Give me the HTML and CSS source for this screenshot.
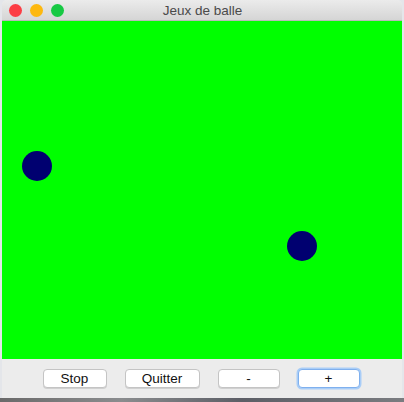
FILE: index.html
```html
<!DOCTYPE html>
<html>
<head>
<meta charset="utf-8">
<link rel="stylesheet" href="styles.css">
</head>
<body>
<div class="window">
  <div class="titlebar">
    <div class="lights">
      <span class="light red"></span>
      <span class="light yellow"></span>
      <span class="light green"></span>
    </div>
    <div class="title">Jeux de balle</div>
  </div>
  <div class="canvas">
    <div class="ball ball1"></div>
    <div class="ball ball2"></div>
  </div>
  <div class="panel">
    <button class="btn w-stop">Stop</button>
    <button class="btn w-quit">Quitter</button>
    <button class="btn w-small">-</button>
    <button class="btn w-small focus">+</button>
  </div>
</div>
<div class="desktop"></div>
</body>
</html>
```
FILE: styles.css
```css
html, body {
  margin: 0;
  padding: 0;
}
body {
  width: 404px;
  height: 402px;
  background: #e4e6ea;
  overflow: hidden;
  font-family: "Liberation Sans", Arial, sans-serif;
}
.window {
  margin-left: 2px;
  width: 400px;
  height: 398px;
  display: flex;
  flex-direction: column;
  border-radius: 5px 5px 0 0;
  overflow: hidden;
  background: #ececec;
}
.titlebar {
  height: 20px;
  border-bottom: 1px solid #b9b9b9;
  background: linear-gradient(#ebebeb, #d5d5d5);
  position: relative;
  display: flex;
  align-items: center;
  justify-content: center;
}
.lights {
  position: absolute;
  left: 7px;
  top: 4px;
  display: flex;
  gap: 8px;
}
.light {
  width: 13px;
  height: 13px;
  border-radius: 50%;
  display: block;
}
.red { background: #fc3d44; }
.yellow { background: #fdb80f; }
.green { background: #17c943; }
.title {
  font-size: 13.5px;
  color: #4a4a4a;
  margin-left: 1px;
  padding-top: 1px;
}
.canvas {
  height: 338px;
  background: #00ff00;
  position: relative;
}
.ball {
  position: absolute;
  width: 30px;
  height: 30px;
  border-radius: 50%;
  background: #000070;
}
.ball1 { left: 20px; top: 130px; }
.ball2 { left: 285px; top: 210px; }
.panel {
  flex: 1;
  display: flex;
  justify-content: center;
  align-items: flex-start;
  padding-top: 10px;
  padding-right: 2px;
  gap: 18px;
  background: #ececec;
}
.btn {
  height: 19px;
  padding: 0;
  border: 1px solid #c4c4c4;
  border-radius: 4px;
  background: #ffffff;
  font-family: "Liberation Sans", Arial, sans-serif;
  font-size: 13.5px;
  color: #111;
  line-height: 17px;
  box-shadow: 0 1px 0 #d0d0d0;
}
.w-stop { width: 64px; }
.w-quit { width: 75px; }
.w-small { width: 62px; }
.focus {
  border: 1px solid #7fb0ee;
  box-shadow: 0 0 0 1.5px #a9cdf7;
}
.desktop {
  height: 4px;
  background: linear-gradient(90deg, #6a6a6a, #8a8c8e 30%, #5c5e66 60%, #7a7c80);
}
```
